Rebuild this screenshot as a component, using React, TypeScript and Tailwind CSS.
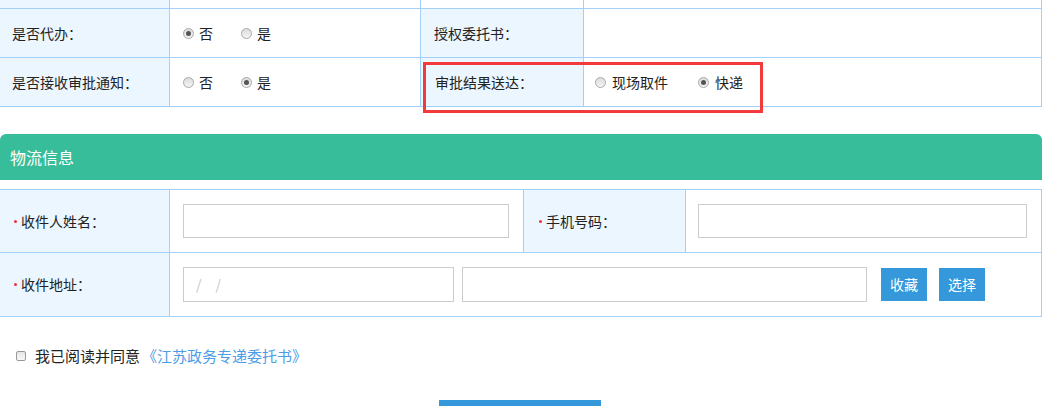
import React from "react";

const FONT = { fontFamily: '"Noto Sans CJK SC", "Noto Sans", sans-serif' };

function Radio({ checked }: { checked?: boolean }) {
  return (
    <span className="relative inline-flex h-[11px] w-[11px] shrink-0 items-center justify-center rounded-full border border-[#a9a9a9] bg-gradient-to-b from-[#dcdcdc] to-[#f4f4f4]">
      {checked && <span className="h-[5px] w-[5px] rounded-full bg-[#555]" />}
    </span>
  );
}

function RadioOpt({ label, checked, gap = "gap-[5px]" }: { label: string; checked?: boolean; gap?: string }) {
  return (
    <span className={`inline-flex items-center ${gap}`}>
      <Radio checked={checked} />
      <span>{label}</span>
    </span>
  );
}

function Req() {
  return <span className="mr-[4px] inline-block h-[3px] w-[3px] rounded-full bg-[#f23030]" />;
}

export default function App() {
  const bd = "border-[#a3d0f8]";
  const lbl = `bg-[#ebf6fe] border-r border-b ${bd} flex items-center`;
  const val = `bg-white border-r border-b ${bd} flex items-center`;
  return (
    <div className="h-[406px] w-[1048px] overflow-hidden bg-white text-[14px] text-[#222]" style={FONT}>
      {/* top table */}
      <div className="relative w-[1042px]">
        <div className="grid grid-cols-[170px_251px_163px_458px]">
          <div className={`${lbl} h-[9px]`} />
          <div className={`${val} h-[9px]`} />
          <div className={`${val} h-[9px]`} />
          <div className={`${val} h-[9px]`} />

          <div className={`${lbl} h-[49px] pl-[12px]`}>是否代办：</div>
          <div className={`${val} h-[49px] gap-[28px] pl-[13px]`}>
            <RadioOpt label="否" checked />
            <RadioOpt label="是" />
          </div>
          <div className={`${lbl} h-[49px] pl-[13px]`}>授权委托书：</div>
          <div className={`${val} h-[49px]`} />

          <div className={`${lbl} h-[49px] pl-[12px]`}>是否接收审批通知：</div>
          <div className={`${val} h-[49px] gap-[28px] pl-[13px]`}>
            <RadioOpt label="否" />
            <RadioOpt label="是" checked />
          </div>
          <div className={`${lbl} h-[49px] pl-[14px]`}>审批结果送达：</div>
          <div className={`${val} h-[49px] gap-[30px] pl-[11px]`}>
            <RadioOpt label="现场取件" gap="gap-[6px]" />
            <RadioOpt label="快递" checked gap="gap-[6px]" />
          </div>
        </div>
        <div className="pointer-events-none absolute left-[423px] top-[62px] h-[51px] w-[340px] border-[3px] border-[#f23a3c]" />
      </div>

      {/* header */}
      <div className="mt-[27px] flex h-[46px] w-[1042px] items-center rounded-t-[6px] bg-[#38bd9a] pl-[10px] text-[16px] text-white">
        物流信息
      </div>

      {/* bottom table */}
      <div className={`mt-[9px] grid w-[1042px] grid-cols-[170px_354px_162px_356px] border-t ${bd}`}>
        <div className={`${lbl} h-[63px] pl-[14px]`}>
          <Req />
          收件人姓名：
        </div>
        <div className={`${val} h-[63px] pl-[13px]`}>
          <div className="h-[34px] w-[326px] border border-[#cccccc] bg-white" />
        </div>
        <div className={`${lbl} h-[63px] pl-[15px]`}>
          <Req />
          手机号码：
        </div>
        <div className={`${val} h-[63px] pl-[12px]`}>
          <div className="h-[34px] w-[329px] border border-[#cccccc] bg-white" />
        </div>

        <div className={`${lbl} h-[64px] pl-[14px]`}>
          <Req />
          收件地址：
        </div>
        <div className={`${val} col-span-3 h-[64px] pl-[13px]`}>
          <div className="flex h-[35px] w-[271px] items-center gap-[14px] border border-[#cccccc] bg-white pl-[12px] text-[14px] text-[#c8c8c8]">
            <span>/</span>
            <span>/</span>
          </div>
          <div className="ml-[8px] h-[35px] w-[405px] border border-[#cccccc] bg-white" />
          <button className="ml-[14px] flex h-[33px] w-[46px] items-center justify-center bg-[#3498db] text-[14px] text-white">
            收藏
          </button>
          <button className="ml-[12px] flex h-[33px] w-[46px] items-center justify-center bg-[#3498db] text-[14px] text-white">
            选择
          </button>
        </div>
      </div>

      {/* agreement */}
      <div className="mt-[29px] flex h-[20px] items-center pl-[16px] text-[15px]">
        <span className="inline-block h-[10px] w-[10px] rounded-[2px] border border-[#999] bg-gradient-to-b from-[#e6e6e6] to-[#f8f8f8]" />
        <span className="ml-[9px]">我已阅读并同意</span>
        <span className="ml-[2px] text-[#4b9de6]">《江苏政务专递委托书》</span>
      </div>

      {/* submit bar */}
      <div className="ml-[439px] mt-[34px] h-[20px] w-[162px] bg-[#3498db]" />
    </div>
  );
}
